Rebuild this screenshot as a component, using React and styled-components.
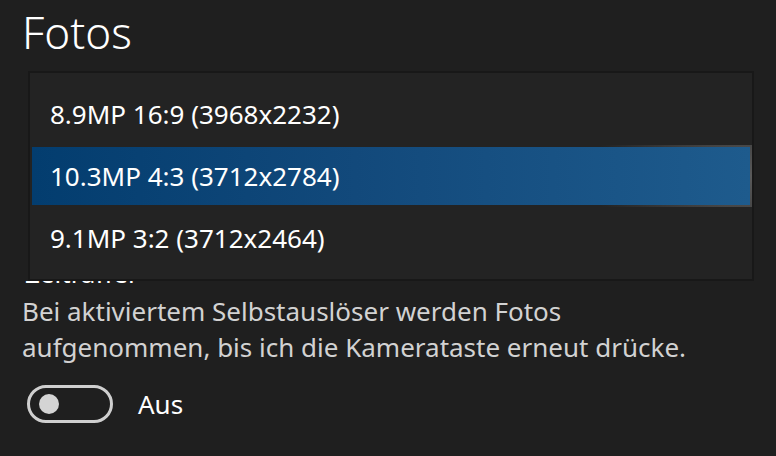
import React from "react";
import styled, { createGlobalStyle } from "styled-components";

const GlobalStyle = createGlobalStyle`
  html, body {
    margin: 0;
    padding: 0;
    background: #1f1f1f;
  }
  body {
    font-family: "Noto Sans", "Open Sans", sans-serif;
    color: #fff;
  }
`;

const Page = styled.div`
  position: relative;
  width: 776px;
  height: 456px;
  overflow: hidden;
  background: #1f1f1f;
  padding: 0 22px;
  box-sizing: border-box;
`;

const Title = styled.h1`
  margin: 0;
  padding-top: 4px;
  font-size: 44px;
  font-weight: 300;
  line-height: 56px;
  color: #fff;
`;

// room taken by the closed resolution combo box under the open list
const ComboSpacer = styled.div`
  height: 196px;
`;

const Label = styled.div`
  font-size: 26px;
  line-height: 34px;
  color: #fff;
  padding-left: 3px;
`;

const Description = styled.p`
  margin: 3px 0 0;
  font-size: 26px;
  line-height: 36px;
  color: #d2d2d2;
`;

const ToggleRow = styled.div`
  display: flex;
  align-items: center;
  gap: 25px;
  margin-top: 20px;
  padding-left: 5px;
`;

const Track = styled.div`
  width: 86px;
  height: 38px;
  box-sizing: border-box;
  border: 3px solid #cfcfcf;
  border-radius: 19px;
  display: flex;
  align-items: center;
  padding-left: 9px;
`;

const Knob = styled.div`
  width: 20px;
  height: 20px;
  border-radius: 50%;
  background: #d4d4d4;
`;

const ToggleText = styled.span`
  font-size: 26px;
  color: #fff;
`;

const Menu = styled.div`
  position: absolute;
  left: 28px;
  top: 71px;
  width: 726px;
  height: 210px;
  box-sizing: border-box;
  background: #232323;
  border: 2px solid #181818;
  box-shadow: -8px 0 0 #1f1f1f;
  padding: 10px 0 0;
  display: flex;
  flex-direction: column;
`;

const Item = styled.div`
  height: 62px;
  box-sizing: border-box;
  display: flex;
  align-items: center;
  padding-left: 18px;
  font-size: 26px;
  color: #fff;
  border: 2px solid transparent;
  background: ${(p) =>
    p.$selected
      ? "linear-gradient(90deg, #033d6f 0%, #12497b 45%, #1e5b8d 100%) padding-box, radial-gradient(ellipse 160px 90px at 100% 50%, #5a5a5a 0%, #444 40%, rgba(60,60,60,0) 100%) border-box"
      : "transparent"};
`;

const options = [
  "8.9MP 16:9 (3968x2232)",
  "10.3MP 4:3 (3712x2784)",
  "9.1MP 3:2 (3712x2464)",
];

export default function App() {
  return (
    <Page>
      <GlobalStyle />
      <Title>Fotos</Title>
      <ComboSpacer />
      <Label>Zeitraffer</Label>
      <Description>
        Bei aktiviertem Selbstauslöser werden Fotos
        <br />
        aufgenommen, bis ich die Kamerataste erneut drücke.
      </Description>
      <ToggleRow>
        <Track>
          <Knob />
        </Track>
        <ToggleText>Aus</ToggleText>
      </ToggleRow>
      <Menu>
        {options.map((o, i) => (
          <Item key={o} $selected={i === 1}>
            {o}
          </Item>
        ))}
      </Menu>
    </Page>
  );
}
